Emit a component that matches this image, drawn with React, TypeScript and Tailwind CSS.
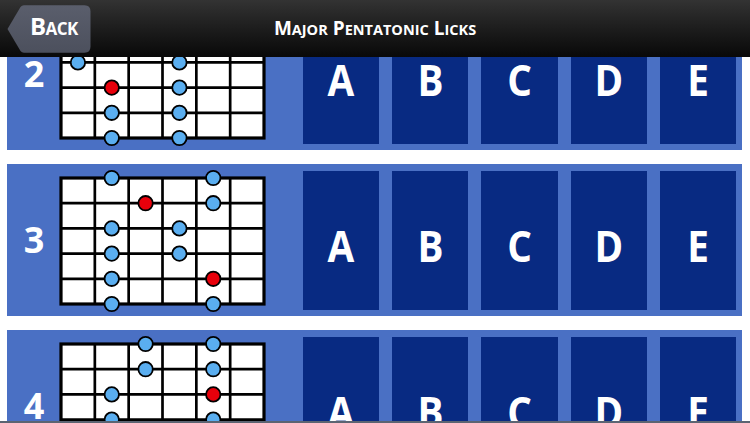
import React from "react";

type Dot = [number, number, boolean];

const ROWS: { n: number; dots: Dot[] }[] = [
  {
    n: 2,
    dots: [
      [0, 0, false], [0, 3, false],
      [1, 1, false], [1, 3, false],
      [2, 0, false], [2, 3, false],
      [3, 1, true], [3, 3, false],
      [4, 1, false], [4, 3, false],
      [5, 1, false], [5, 3, false],
    ],
  },
  {
    n: 3,
    dots: [
      [0, 1, false], [0, 4, false],
      [1, 2, true], [1, 4, false],
      [2, 1, false], [2, 3, false],
      [3, 1, false], [3, 3, false],
      [4, 1, false], [4, 4, true],
      [5, 1, false], [5, 4, false],
    ],
  },
  {
    n: 4,
    dots: [
      [0, 2, false], [0, 4, false],
      [1, 2, false], [1, 4, false],
      [2, 1, false], [2, 4, true],
      [3, 1, false], [3, 4, false],
      [4, 2, false], [4, 4, false],
      [5, 2, false], [5, 4, false],
    ],
  },
];

function Fretboard({ dots }: { dots: Dot[] }) {
  const W = 203;
  const H = 126;
  const pad = 9;
  const cw = W / 6;
  const rh = H / 5;
  return (
    <svg
      width={W + 2 * pad}
      height={H + 2 * pad}
      viewBox={`${-pad} ${-pad} ${W + 2 * pad} ${H + 2 * pad}`}
      className="block shrink-0 ml-[-9px] mt-[5px]"
    >
      <rect x={0} y={0} width={W} height={H} fill="#ffffff" />
      {[1, 2, 3, 4, 5].map((i) => (
        <line key={"v" + i} x1={i * cw} y1={0} x2={i * cw} y2={H} stroke="#000" strokeWidth={2.7} />
      ))}
      {[1, 2, 3, 4].map((i) => (
        <line key={"h" + i} x1={0} y1={i * rh} x2={W} y2={i * rh} stroke="#000" strokeWidth={2.7} />
      ))}
      <rect x={0} y={0} width={W} height={H} fill="none" stroke="#000" strokeWidth={3.2} />
      {dots.map(([s, c, red], i) => (
        <circle
          key={i}
          cx={(c + 0.5) * cw}
          cy={s * rh}
          r={7.2}
          fill={red ? "#e8000b" : "#5aaef0"}
          stroke="#000"
          strokeWidth={1.8}
        />
      ))}
    </svg>
  );
}

function SmallCaps({ text, big, small }: { text: string; big: string; small: string }) {
  const words = text.split(" ");
  return (
    <span className="inline-flex items-baseline gap-[5px]">
      {words.map((w, i) => (
        <span key={i} className="inline-flex items-baseline">
          <span className={big}>{w[0]}</span>
          <span className={small}>{w.slice(1).toUpperCase()}</span>
        </span>
      ))}
    </span>
  );
}

function Row({ n, dots }: { n: number; dots: Dot[] }) {
  return (
    <div className="flex h-[152px] shrink-0 bg-[#4a70c4]">
      <div className="flex w-[54px] shrink-0 items-center justify-center">
        <span className="text-[36px] font-bold leading-none text-white">{n}</span>
      </div>
      <Fretboard dots={dots} />
      <div className="ml-auto mr-[6px] mt-[7px] mb-[6px] grid w-[433px] grid-cols-5 gap-[13px]">
        {["A", "B", "C", "D", "E"].map((l) => (
          <div key={l} className="flex justify-center bg-[#082a82] pt-[53px]">
            <span className="text-[43px] font-bold leading-none text-white scale-x-90">{l}</span>
          </div>
        ))}
      </div>
    </div>
  );
}

export default function App() {
  return (
    <div className="relative h-[423px] w-[750px] overflow-hidden bg-white font-['Open_Sans',sans-serif]">
      <div className="mt-[-2px] flex flex-col gap-[14px] pl-[7px] pr-[8px]">
        {ROWS.map((r) => (
          <Row key={r.n} n={r.n} dots={r.dots} />
        ))}
      </div>

      <div className="absolute left-0 right-0 top-0 grid h-[57px] grid-cols-[1fr_auto_1fr] items-center bg-linear-to-b from-[#333333] to-[#090909]">
        <div className="flex items-center pl-[7px]">
          <button className="relative flex h-[48px] w-[84px] items-center pl-[23px]">
            <svg className="absolute inset-0" width={84} height={48} viewBox="0 0 84 48">
              <defs>
                <linearGradient id="bk" x1="0" y1="0" x2="0" y2="1">
                  <stop offset="0" stopColor="#5a5e6c" />
                  <stop offset="1" stopColor="#4c505d" />
                </linearGradient>
              </defs>
              <path
                d="M0.5 24 L13.5 2 Q14.7 0.3 17 0.3 H77.5 Q83.5 0.3 83.5 6.5 V41.5 Q83.5 47.7 77.5 47.7 H17 Q14.7 47.7 13.5 46 Z"
                fill="url(#bk)"
              />
            </svg>
            <span className="relative mt-[-2px] text-white tracking-[-0.6px]">
              <SmallCaps text="Back" big="text-[24px] font-bold leading-none" small="text-[17px] font-bold leading-none" />
            </span>
          </button>
        </div>
        <div className="text-white">
          <SmallCaps
            text="Major Pentatonic Licks"
            big="text-[19px] font-bold leading-none"
            small="text-[14.5px] font-bold leading-none"
          />
        </div>
        <div />
      </div>

      <div className="absolute bottom-0 left-0 right-0 h-[2px] bg-[#5b6472]" />
    </div>
  );
}
